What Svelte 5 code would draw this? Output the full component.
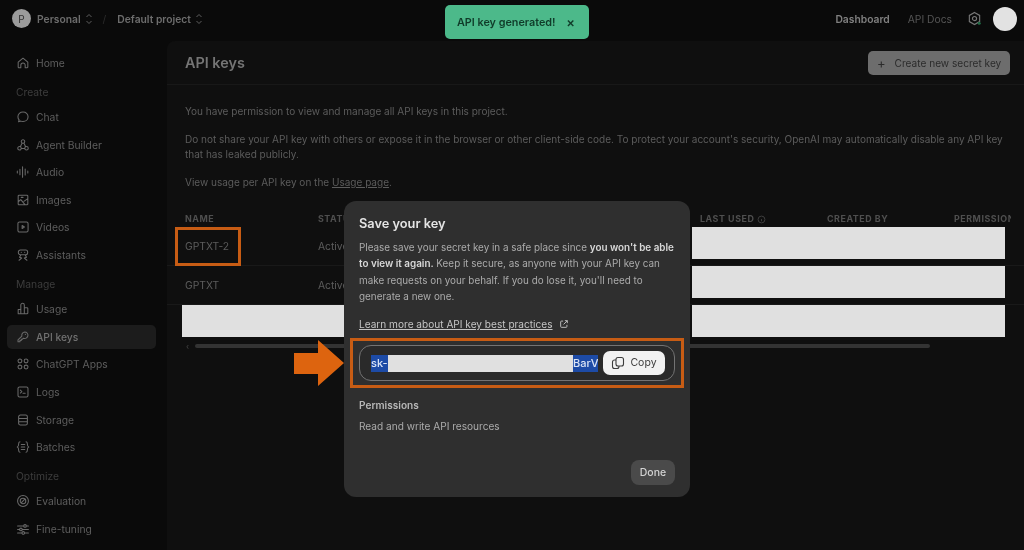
<script>
  const icons = {
    home: 'M2.500 7 8 2.500 13.500 7v5.500a1 1 0 0 1-1 1H10.500v-3a2.500 2.500 0 0 0-5 0v3H3.500a1 1 0 0 1-1-1z',
    chat: 'M8 2.300c3.300 0 5.800 2.300 5.800 5.400s-2.500 5.400-5.800 5.400c-.9 0-1.700-.1-2.400-.4l-2.700.8.7-2.200C2.800 10.600 2.200 9.200 2.200 7.700 2.200 4.600 4.700 2.300 8 2.300z',
    agent: 'M8 2a2 2 0 1 0 0 4 2 2 0 0 0 0-4zM4 9.800a2 2 0 1 0 0 4 2 2 0 0 0 0-4zM12 9.800a2 2 0 1 0 0 4 2 2 0 0 0 0-4zM6.800 6 5 10M9.200 6 11 10M6 12h4',
    audio: 'M1.500 7v2M4.500 5v6M7.500 2v12M10.500 4.500v7M13.500 7v2',
    images: 'M3.500 2.500h9a1 1 0 0 1 1 1v9a1 1 0 0 1-1 1h-9a1 1 0 0 1-1-1v-9a1 1 0 0 1 1-1zM2.500 10l3-2.500 5 6M9 9.500l4.500-3M6 5h2',
    videos: 'M4 2.200h8a1.800 1.800 0 0 1 1.800 1.800v8a1.800 1.800 0 0 1-1.800 1.800H4A1.800 1.800 0 0 1 2.200 12V4A1.800 1.800 0 0 1 4 2.200zM7 6.300l2.600 1.700L7 9.700z',
    assistants: 'M5 2.200h6a2.300 2.300 0 0 1 2.300 2.300v1A2.300 2.300 0 0 1 11 7.800H5A2.300 2.300 0 0 1 2.700 5.500v-1A2.300 2.300 0 0 1 5 2.200zM6 5h.01M10 5h.01M5.500 8l-1.500 2.500 2.500 1L3.500 14M10.500 8l1.500 2.500-2.500 1 3 2.500',
    usage: 'M2.500 8.500h3v5h-3zM5.500 13.500V3.500a2 2 0 0 1 4 0v10M9.500 6.500h3a1 1 0 0 1 1 1v5a1 1 0 0 1-1 1h-7',
    key: 'M10 2.300a3.700 3.700 0 1 1-1.500 7.100L7.500 10.500H6v1.500H4.500v1.500H2.300v-2.200l4.400-4.400A3.700 3.700 0 0 1 10 2.300zM10.700 5h.01',
    apps: 'M2.300 4.500a2.200 2.200 0 1 1 4.400 0 2.200 2.200 0 0 1-4.400 0zM9.300 4.500a2.200 2.200 0 1 1 4.400 0 2.200 2.200 0 0 1-4.400 0zM2.300 11.500a2.200 2.200 0 1 1 4.400 0 2.200 2.200 0 0 1-4.400 0zM9.300 11.500a2.200 2.200 0 1 1 4.400 0 2.200 2.200 0 0 1-4.400 0z',
    logs: 'M4 2.300h8A1.700 1.700 0 0 1 13.700 4v8a1.700 1.700 0 0 1-1.700 1.700H4A1.700 1.700 0 0 1 2.300 12V4A1.700 1.700 0 0 1 4 2.300zM5 5.800l1.700 1.700L5 9.200M8 9.500h2.500',
    storage: 'M5 2.300h6a2 2 0 0 1 2 2v7.400a2 2 0 0 1-2 2H5a2 2 0 0 1-2-2V4.300a2 2 0 0 1 2-2zM3 6.200h10M3 10h10',
    batches: 'M4.500 2C3 2 3 3 3 4.500S3 7.500 1.500 8C3 8.500 3 10 3 11.500S3 14 4.500 14M11.500 2C13 2 13 3 13 4.500s0 3 1.500 3.500C13 8.500 13 10 13 11.500S13 14 11.500 14M6 5.200h4M6 8h4M6 10.800h4',
    evaluation: 'M8 1.800a6.200 6.200 0 1 1 0 12.400A6.200 6.200 0 0 1 8 1.800zM8 4.800a3.200 3.200 0 1 1 0 6.400 3.200 3.200 0 0 1 0-6.400zM6.500 9.500l3-3',
    tuning: 'M1.800 4.500h7M11.800 4.500h2.400M1.800 8.500h2.400M7 8.500h7.200M1.800 12.500h5M9.800 12.500h4.400M10.300 3a1.500 1.500 0 1 1 0 3 1.500 1.500 0 0 1 0-3zM5.600 7a1.500 1.500 0 1 1 0 3 1.500 1.500 0 0 1 0-3zM8.300 11a1.500 1.500 0 1 1 0 3 1.500 1.500 0 0 1 0-3z'
  };
  const nav = [
    { name: 'Home', icon: 'home' },
    { label: 'Create' },
    { name: 'Chat', icon: 'chat' },
    { name: 'Agent Builder', icon: 'agent' },
    { name: 'Audio', icon: 'audio' },
    { name: 'Images', icon: 'images' },
    { name: 'Videos', icon: 'videos' },
    { name: 'Assistants', icon: 'assistants' },
    { label: 'Manage' },
    { name: 'Usage', icon: 'usage' },
    { name: 'API keys', icon: 'key', active: true },
    { name: 'ChatGPT Apps', icon: 'apps' },
    { name: 'Logs', icon: 'logs' },
    { name: 'Storage', icon: 'storage' },
    { name: 'Batches', icon: 'batches' },
    { label: 'Optimize' },
    { name: 'Evaluation', icon: 'evaluation' },
    { name: 'Fine-tuning', icon: 'tuning' }
  ];
</script>

{#snippet updown()}
  <svg class="updown" viewBox="0 0 8 12" aria-hidden="true"><path d="M1.500 4 4 1.500 6.500 4M1.500 8 4 10.500 6.500 8" /></svg>
{/snippet}

<div class="app">
  <header class="top">
    <div class="crumbs">
      <span class="avatar">P</span>
      <span class="crumb">Personal</span>
      {@render updown()}
      <span class="slash">/</span>
      <span class="crumb">Default project</span>
      {@render updown()}
    </div>
    <div class="top-right">
      <span class="dash">Dashboard</span>
      <span class="docs">API Docs</span>
      <svg class="gear" viewBox="0 0 16 16" aria-hidden="true">
        <path d="M8 1.500 13.500 4.700v6.600L8 14.500 2.500 11.300V4.700z" />
        <circle cx="8" cy="8" r="2.200" />
        <circle class="dot" cx="13" cy="13" r="1.600" />
      </svg>
      <span class="user"></span>
    </div>
  </header>

  <div class="body">
    <aside class="side">
      {#each nav as item}
        {#if item.label}
          <div class="section">{item.label}</div>
        {:else}
          <div class="item" class:active={item.active}>
            <span class="pill">
              <svg class="nav-icon" viewBox="0 0 16 16" aria-hidden="true"><path d={icons[item.icon]} /></svg>
              {item.name}
            </span>
          </div>
        {/if}
      {/each}
    </aside>

    <main class="main">
      <div class="titlebar">
        <h1>API keys</h1>
        <div class="create"><span class="plus">+</span>Create new secret key</div>
      </div>
      <div class="content">
        <p>You have permission to view and manage all API keys in this project.</p>
        <p>Do not share your API key with others or expose it in the browser or other client-side code. To protect your account's security, OpenAI may automatically disable any API key that has leaked publicly.</p>
        <p>View usage per API key on the <u>Usage page</u>.</p>
      </div>
      <div class="table">
        <div class="row head">
          <span>NAME</span>
          <span>STATUS</span>
          <span class="lu">LAST USED
            <svg class="info" viewBox="0 0 10 10" aria-hidden="true"><circle cx="5" cy="5" r="3.800" /><path d="M5 4.500v2.500M5 3h.01" /></svg>
          </span>
          <span>CREATED BY</span>
          <span>PERMISSIONS</span>
        </div>
        <div class="row data">
          <span>GPTXT-2</span>
          <span>Active</span>
          <span class="mask"></span>
        </div>
        <div class="row data">
          <span>GPTXT</span>
          <span>Active</span>
          <span class="mask"></span>
        </div>
        <div class="row data plain">
          <span class="mask"></span>
          <span></span>
          <span class="mask"></span>
        </div>
        <div class="scroll"><span class="caret">‹</span><span class="thumb"></span></div>
      </div>
    </main>
  </div>

  <div class="toast">API key generated!<span class="x">×</span></div>

  <span class="mark name-mark"></span>

  <svg class="arrow" viewBox="0 0 50 46" aria-hidden="true"><path d="M0 13h24V0l26 23-26 23V34H0z" /></svg>

  <section class="modal">
    <h2>Save your key</h2>
    <p class="lead">Please save your secret key in a safe place since <b>you won't be able to view it again.</b> Keep it secure, as anyone with your API key can make requests on your behalf. If you do lose it, you'll need to generate a new one.</p>
    <div class="learn">
      <u>Learn more about API key best practices</u>
      <svg class="ext" viewBox="0 0 12 12" aria-hidden="true"><path d="M5 2.500H3A1 1 0 0 0 2 3.500v5.500a1 1 0 0 0 1 1h5.500a1 1 0 0 0 1-1V7M7 2h3v3M10 2 5.500 6.500" /></svg>
    </div>
    <div class="keywrap">
      <div class="field">
        <span class="sel">sk-</span><span class="redact"></span><span class="sel tail">BarV4</span>
        <span class="copy">
          <svg viewBox="0 0 14 14" aria-hidden="true"><rect x="5" y="1.500" width="7.500" height="8.500" rx="2" /><path d="M5 4H3.500a2 2 0 0 0-2 2v4.500a2 2 0 0 0 2 2H6a2 2 0 0 0 2-2V10" /></svg>
          Copy
        </span>
      </div>
    </div>
    <h3>Permissions</h3>
    <div class="perm">Read and write API resources</div>
    <div class="foot"><span class="done">Done</span></div>
  </section>
</div>

<style>
  :global(body) { margin: 0; background: #0a0a0a; }
  .app {
    position: relative;
    width: 1024px;
    height: 550px;
    overflow: hidden;
    background: #0a0a0a;
    font-family: Inter, "Liberation Sans", sans-serif;
    font-size: 10.300px;
    color: #5c5c5c;
    filter: blur(0.4px);
  }
  .top {
    display: flex;
    align-items: center;
    justify-content: space-between;
    height: 41px;
    padding: 0 7px 4px 12px;
    box-sizing: border-box;
  }
  .crumbs, .top-right { display: flex; align-items: center; }
  .avatar {
    display: flex;
    align-items: center;
    justify-content: center;
    width: 19px;
    height: 19px;
    border-radius: 50%;
    background: #9b9b9b;
    color: #333;
    font-size: 10px;
    margin-right: 6px;
  }
  .crumb { font-weight: 600; color: #6d6d6d; }
  .updown { width: 8px; height: 12px; margin-left: 4px; fill: none; stroke: #5f5f5f; stroke-width: 1; }
  .slash { color: #2c2c2c; margin: 0 11px 0 10px; }
  .dash { font-weight: 600; color: #808080; margin-right: 18px; }
  .docs { color: #555; margin-right: 15px; }
  .gear { width: 15px; height: 15px; margin-right: 11px; fill: none; stroke: #777; stroke-width: 1.200; }
  .gear .dot { fill: #1f6b45; stroke: none; }
  .user { width: 24px; height: 24px; border-radius: 50%; background: #e2e2e2; }

  .body { display: flex; height: 509px; }
  .side { width: 167px; flex: none; box-sizing: border-box; padding: 8px 11px 0 7px; }
  .section { height: 26.600px; line-height: 30.400px; padding-left: 9px; color: #3d3d3d; }
  .item { height: 27.600px; display: flex; align-items: center; }
  .pill {
    display: flex;
    align-items: center;
    gap: 6px;
    width: 100%;
    height: 24px;
    padding-left: 9px;
    border-radius: 5px;
    color: #5e5e5e;
  }
  .active .pill { background: #1c1c1c; color: #717171; font-weight: 500; }
  .nav-icon { width: 14px; height: 14px; flex: none; fill: none; stroke: #6a6a6a; stroke-width: 1.200; stroke-linecap: round; stroke-linejoin: round; }

  .main { flex: 1; min-width: 0; background: #0f0f0f; border-top-left-radius: 8px; overflow: hidden; }
  .titlebar {
    display: flex;
    align-items: center;
    justify-content: space-between;
    height: 44px;
    padding: 0 14px 0 18px;
    border-bottom: 1px solid #181818;
    box-sizing: border-box;
  }
  h1 { margin: 0; font-size: 14.400px; font-weight: 600; color: #757575; }
  .create {
    display: flex;
    align-items: center;
    height: 24px;
    width: 142px;
    box-sizing: border-box;
    padding-left: 9px;
    border-radius: 5px;
    background: #6d6d6d;
    color: #2b2b2b;
    font-size: 10.100px;
    white-space: nowrap;
  }
  .plus { font-size: 13px; margin-right: 9px; }
  .content { padding: 19px 18px 0; font-size: 10.020px; }
  .content p { margin: 0 0 13px; line-height: 15px; }
  .table { margin-top: 21px; }
  .row { display: grid; grid-template-columns: 133px 382px 127px 127px 127px; padding-left: 18px; white-space: nowrap; }
  .head { height: 16px; line-height: 16px; font-size: 8.900px; font-weight: 700; letter-spacing: 0.550px; color: #4f4f4f; overflow: hidden; margin-right: 13px; }
  .lu { display: flex; align-items: center; gap: 3px; }
  .info { width: 9px; height: 9px; fill: none; stroke: #4f4f4f; stroke-width: 0.800; }
  .data { height: 39px; line-height: 39.500px; border-bottom: 1px solid #191919; box-sizing: border-box; grid-template-columns: 133px 374px 313px; color: #5c5c5c; }
  .plain { border-bottom: none; grid-template-columns: 163px 347px 313px; padding-left: 15px; }
  .mask { display: block; height: 32px; background: #e0e0e0; }
  .scroll { display: flex; align-items: center; height: 5px; margin-top: -1px; padding-left: 19px; }
  .caret { font-size: 8px; width: 9px; color: #444; }
  .thumb { width: 735px; height: 4px; border-radius: 2px; background: #333; }

  .toast {
    position: absolute;
    left: 445px;
    top: 5px;
    width: 144px;
    height: 34px;
    display: flex;
    align-items: center;
    justify-content: space-between;
    box-sizing: border-box;
    padding: 0 14px 0 12px;
    border-radius: 5px;
    background: #4cb98a;
    color: #103b29;
    font-weight: 600;
    font-size: 10.800px;
  }
  .x { font-size: 13px; }

  .mark { position: absolute; border: 3px solid #c75c14; box-sizing: border-box; }
  .name-mark { left: 175px; top: 227px; width: 66px; height: 39px; }
  .arrow { position: absolute; left: 294px; top: 340px; width: 50px; height: 46px; fill: #dd640f; }

  .modal {
    position: absolute;
    left: 344px;
    top: 201px;
    width: 346px;
    height: 296px;
    box-sizing: border-box;
    padding: 15px 15px 12px;
    display: flex;
    flex-direction: column;
    background: #2f2f2f;
    border-radius: 12px;
    color: #ababab;
    font-size: 10.100px;
  }
  h2 { margin: 0; font-size: 12.800px; line-height: 16px; font-weight: 600; color: #e4e4e4; }
  .lead { margin: 7px -6px 0 0; line-height: 16.300px; font-size: 9.900px; white-space: normal; }
  .lead b { font-weight: 600; color: #d8d8d8; }
  .learn { display: flex; align-items: center; gap: 6px; margin-top: 12px; height: 16px; color: #c4c4c4; font-size: 10.100px; }
  .ext { width: 10px; height: 10px; fill: none; stroke: #c4c4c4; stroke-width: 1.100; }
  .keywrap { margin: 6px -9px 0; padding: 4px 6px; border: 3px solid #c75c14; height: 50px; box-sizing: border-box; }
  .field {
    display: flex;
    align-items: center;
    height: 36px;
    margin-top: -0.500px;
    box-sizing: border-box;
    padding: 1px 9px 0 11px;
    border: 1px solid #737373;
    border-radius: 12px;
    background: #2a2a2a;
  }
  .sel { display: block; height: 17px; line-height: 17px; background: #1d4ba6; color: #dbe4f5; font-size: 11px; font-weight: 500; width: 17px; overflow: hidden; white-space: nowrap; }
  .redact { width: 185px; height: 17px; background: #e0e0e0; }
  .sel.tail { width: 25px; }
  .copy {
    display: flex;
    align-items: center;
    justify-content: center;
    gap: 5px;
    margin-left: 5px;
    width: 62px;
    height: 24px;
    margin-top: -1px;
    border-radius: 7px;
    background: #f2f2f2;
    color: #3c3c3c;
    font-size: 10.500px;
  }
  .copy svg { width: 14px; height: 14px; fill: none; stroke: #3c3c3c; stroke-width: 1.100; }
  h3 { margin: 9px 0 0; font-size: 10.100px; line-height: 16px; font-weight: 600; color: #b8b8b8; }
  .perm { margin-top: 5px; line-height: 16px; }
  .foot { margin-top: auto; display: flex; justify-content: flex-end; }
  .done {
    display: flex;
    align-items: center;
    justify-content: center;
    width: 44px;
    height: 25px;
    border-radius: 8px;
    background: #4a4a4a;
    color: #d4d4d4;
    font-weight: 500;
    font-size: 10.500px;
  }
</style>
